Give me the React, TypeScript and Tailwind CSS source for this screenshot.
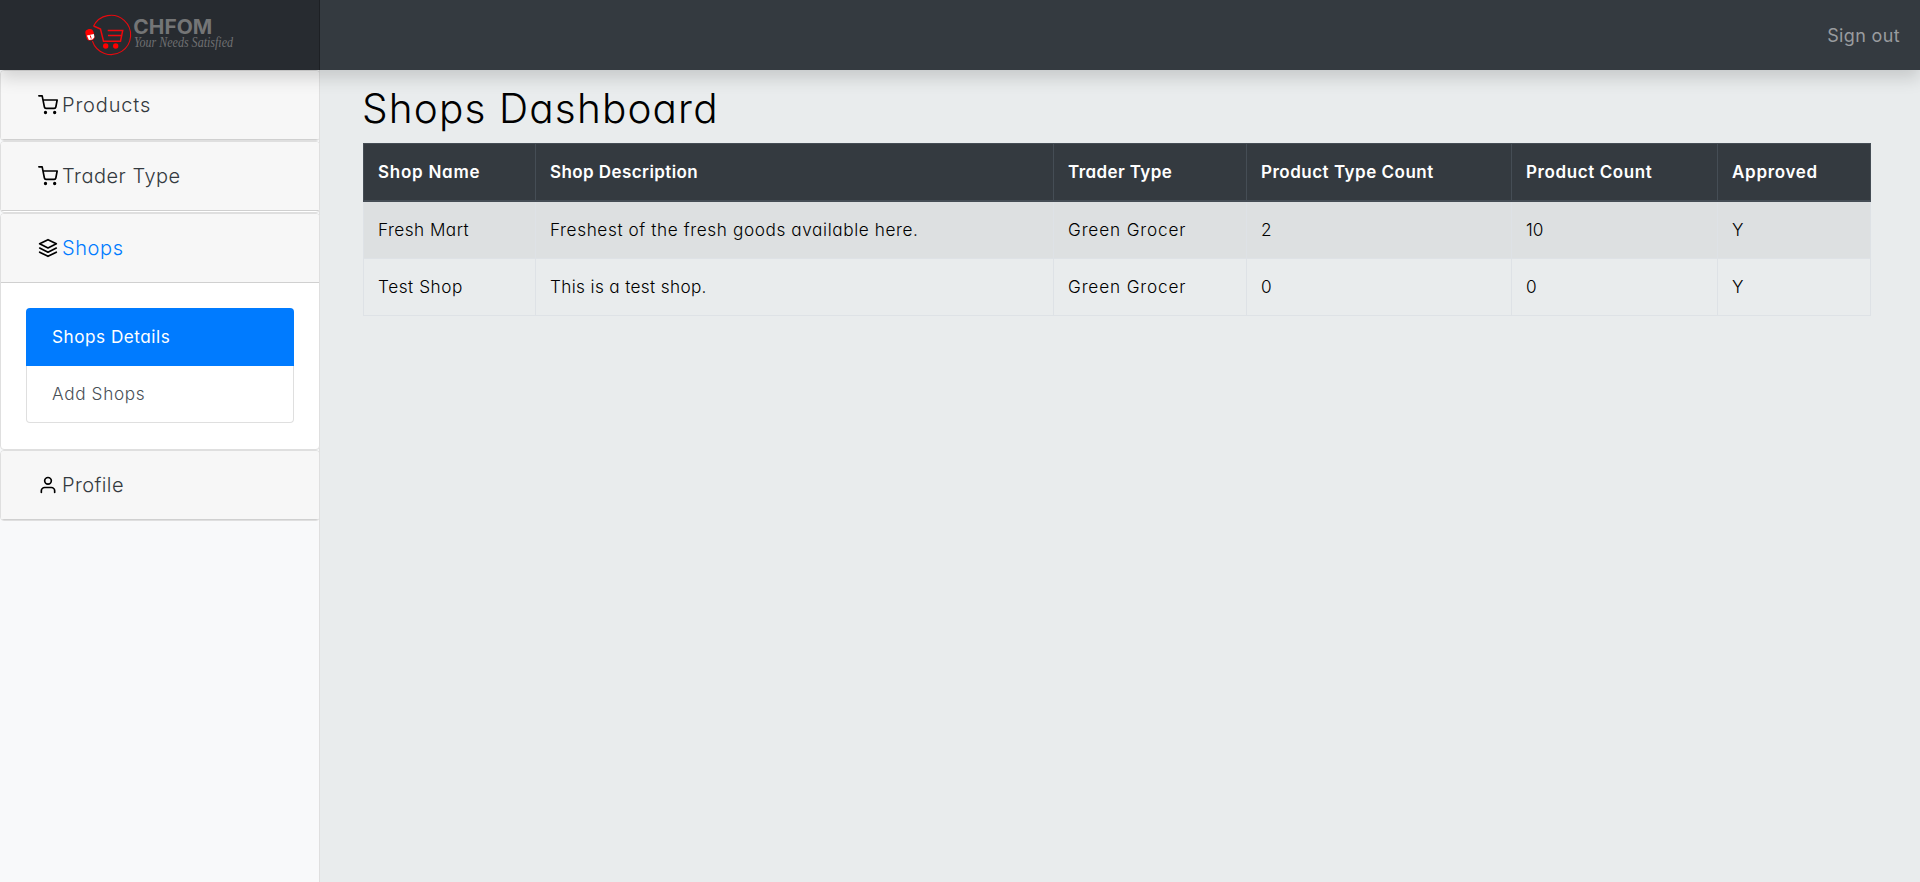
import React from "react";

type Cell = { text: string; spacing: string };

const shops: Cell[][] = [
  [
    { text: "Fresh Mart", spacing: "tracking-[0.45px]" },
    { text: "Freshest of the fresh goods available here.", spacing: "tracking-[0.6px]" },
    { text: "Green Grocer", spacing: "tracking-[0.85px]" },
    { text: "2", spacing: "" },
    { text: "10", spacing: "" },
    { text: "Y", spacing: "" },
  ],
  [
    { text: "Test Shop", spacing: "tracking-[0.55px]" },
    { text: "This is a test shop.", spacing: "tracking-[0.35px]" },
    { text: "Green Grocer", spacing: "tracking-[0.85px]" },
    { text: "0", spacing: "" },
    { text: "0", spacing: "" },
    { text: "Y", spacing: "" },
  ],
];

const columns = [
  { title: "Shop Name", width: "w-[172px] tracking-[0.75px]" },
  { title: "Shop Description", width: "w-[518px] tracking-[0.42px]" },
  { title: "Trader Type", width: "w-[193px] tracking-[0.4px]" },
  { title: "Product Type Count", width: "w-[265px] tracking-[0.5px]" },
  { title: "Product Count", width: "w-[206px] tracking-[0.6px]" },
  { title: "Approved", width: "w-[153px] tracking-[0.7px]" },
];

function Logo() {
  return (
    <svg width="160" height="44" viewBox="0 0 160 44" className="block overflow-visible">
      <path d="M8.6 13A19.6 19.6 0 1 1 7.4 28" fill="none" stroke="#e60a0e" strokeWidth="1.1" />
      <path d="M8.6 13l6.9 3 3 12.2h17l2.2-10.6h-15M23 22.6h13" fill="none" stroke="#f0080c" strokeWidth="1.5" />
      <circle cx="20.7" cy="33" r="2.7" fill="#f00" />
      <circle cx="30.7" cy="33" r="2.7" fill="#f00" />
      <rect x="0.9" y="16" width="8.2" height="11.5" rx="3.8" fill="#f00" transform="rotate(-14 5 22)" />
      <path d="M1.9 22.6l7-1.7.5 3.4-2 2.3-3.5.5z" fill="#fff" />
      <path d="M5.2 22.4l1 3.2" stroke="#f00" strokeWidth="1" />
      <text x="48.3" y="20.8" fontFamily="Inter, sans-serif" fontWeight="700" fontSize="19.8" textLength="79" lengthAdjust="spacingAndGlyphs" fill="#747576">CHFOM</text>
      <text x="49" y="34" fontFamily="Liberation Serif, serif" fontStyle="italic" fontSize="14.5" textLength="99" lengthAdjust="spacingAndGlyphs" fill="#6f7072">Your Needs Satisfied</text>
    </svg>
  );
}

function Icon({ children }: { children: React.ReactNode }) {
  return (
    <svg width="20" height="20" viewBox="0 0 24 24" fill="none" stroke="#000" strokeWidth="2" strokeLinecap="round" strokeLinejoin="round" className="shrink-0">
      {children}
    </svg>
  );
}

function CartIcon() {
  return (
    <Icon>
      <circle cx="9" cy="21" r="1" />
      <circle cx="20" cy="21" r="1" />
      <path d="M1 1h4l2.68 13.39a2 2 0 0 0 2 1.61h9.72a2 2 0 0 0 2-1.61L23 6H6" />
    </Icon>
  );
}

function LayersIcon() {
  return (
    <Icon>
      <path d="M12 2L2 7l10 5 10-5-10-5zM2 17l10 5 10-5M2 12l10 5 10-5" />
    </Icon>
  );
}

function UserIcon() {
  return (
    <Icon>
      <path d="M20 21v-2a4 4 0 0 0-4-4H8a4 4 0 0 0-4 4v2" />
      <circle cx="12" cy="7" r="4" />
    </Icon>
  );
}

type ItemProps = { icon: React.ReactNode; label: string; look: string };

function MenuHeader({ icon, label, look }: ItemProps) {
  return (
    <div className="flex h-[69px] items-center gap-1 border-b border-[#d0d0d0] bg-[#f7f7f7] pl-[37px]">
      {icon}
      <span className={`text-[20px] ${look}`}>{label}</span>
    </div>
  );
}

function Card({ children }: { children: React.ReactNode }) {
  return <div className="-mr-px overflow-hidden rounded border border-[#dfdfdf] bg-white">{children}</div>;
}

export default function App() {
  return (
    <div className="flex h-[882px] w-full flex-col overflow-hidden bg-[#e9eced] font-['Inter',sans-serif] font-[330] text-black [font-feature-settings:'cv11']">
      <header className="relative z-10 flex h-[70px] shrink-0 items-center justify-between bg-[#343a40] shadow-[0_8px_16px_rgba(0,0,0,0.15)]">
        <div className="flex h-full w-[320px] items-center bg-[#272b30] pl-[85px] shadow-[inset_-1px_0_0_rgba(0,0,0,0.25)]">
          <Logo />
        </div>
        <a className="pr-5 text-[18px] font-normal tracking-[0.35px] text-[#999c9f]">Sign out</a>
      </header>
      <div className="flex min-h-0 flex-1">
        <nav className="w-[320px] shrink-0 border-r border-[#dfdfdf] bg-[#f8f9fa]">
          <Card>
            <MenuHeader icon={<CartIcon />} label="Products" look="tracking-[0.85px] text-[#343a40]" />
          </Card>
          <Card>
            <MenuHeader icon={<CartIcon />} label="Trader Type" look="tracking-[0.5px] text-[#343a40]" />
            <div className="h-px" />
          </Card>
          <Card>
            <MenuHeader icon={<LayersIcon />} label="Shops" look="tracking-[0.6px] text-[#007bff]" />
            <div className="px-[25px] pt-[25px] pb-[26px]">
              <div className="flex h-[58px] items-center rounded-t bg-[#007bff] pl-[26px] text-[17.2px] font-normal tracking-[0.5px] text-white">Shops Details</div>
              <div className="flex h-[57px] items-center rounded-b border border-t-0 border-[#dfdfdf] pl-[25px] text-[17.2px] tracking-[0.65px] text-[#495057]">Add Shops</div>
            </div>
          </Card>
          <Card>
            <MenuHeader icon={<UserIcon />} label="Profile" look="tracking-[0.4px] text-[#343a40]" />
          </Card>
        </nav>
        <main className="pt-[15px] pl-[43px]">
          <h1 className="-ml-px h-[58px] text-[40.5px] leading-[48px] tracking-[1.15px]">Shops Dashboard</h1>
          <table className="w-[1507px] table-fixed border-collapse text-left text-[17.2px]">
            <thead>
              <tr className="h-[57px] bg-[#343a40] text-[17px] text-white">
                {columns.map((c) => (
                  <th key={c.title} className={`border border-b-2 border-[#454d55] px-[14px] pt-0.5 font-semibold ${c.width}`}>{c.title}</th>
                ))}
              </tr>
            </thead>
            <tbody>
              {shops.map((row) => (
                <tr key={row[0].text} className="h-[57px] odd:h-[58px] odd:bg-[#dde0e1]">
                  {row.map((cell, i) => (
                    <td key={i} className={`border border-[#dee2e6] px-[14px] ${cell.spacing}`}>{cell.text}</td>
                  ))}
                </tr>
              ))}
            </tbody>
          </table>
        </main>
      </div>
    </div>
  );
}
